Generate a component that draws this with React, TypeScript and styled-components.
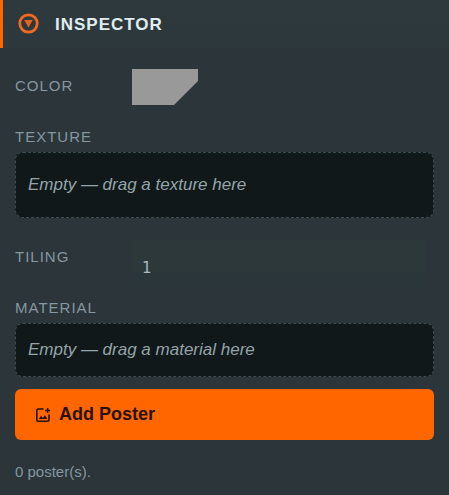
import React, { useId, useState } from "react";
import styled, { createGlobalStyle } from "styled-components";

const GlobalStyle = createGlobalStyle`
  * { box-sizing: border-box; }
  body {
    margin: 0;
    min-height: 100vh;
    background: #2b353a;
    font-family: "Liberation Sans", Arial, sans-serif;
  }
`;

const Panel = styled.section`
  color: #8597a0;
`;

const Header = styled.header`
  display: flex;
  align-items: center;
  gap: 16px;
  height: 48px;
  padding: 0 16px 2px 15px;
  border-left: 3px solid #ff6600;
  background: linear-gradient(#2e393d, #2d383c);
`;

const Title = styled.h2`
  margin: 0;
  padding-top: 4px;
  font-size: 17px;
  line-height: 20px;
  font-weight: 700;
  letter-spacing: 1px;
  color: #e0edf0;
  text-transform: uppercase;
`;

const Body = styled.div`
  display: flex;
  flex-direction: column;
  gap: 22px;
  padding: 21px 15px 12px;
`;

const Field = styled.div`
  display: grid;
  grid-template-columns: 101px minmax(0, 1fr);
  column-gap: 16px;
`;

const Group = styled.div`
  display: flex;
  flex-direction: column;
  gap: 10px;
`;

const Stack = styled.div`
  display: flex;
  flex-direction: column;
  gap: 5px;
`;

const Label = styled.label<{ $inline?: boolean }>`
  padding-top: ${(p) => (p.$inline ? 7 : 0)}px;
  font-size: 15px;
  line-height: 20px;
  letter-spacing: 1px;
  text-transform: uppercase;
`;

const Swatch = styled.input`
  width: 66px;
  height: 36px;
  padding: 0;
  border: 0;
  background: none;
  clip-path: polygon(0 0, 100% 0, 100% 12px, 42px 100%, 0 100%);
  cursor: pointer;

  &::-webkit-color-swatch-wrapper { padding: 0; }
  &::-webkit-color-swatch { border: 0; border-radius: 0; }
`;

const NumberInput = styled.input`
  width: 100%;
  height: 48px;
  margin: 0;
  padding: 8px 10px 0;
  border: 0;
  border-right: 9px solid #2b353a;
  background: linear-gradient(#2d383b 32px, #2b363b 32px);
  color: #a9b9be;
  font: 15px "DejaVu Sans", Verdana, sans-serif;
  outline: 0;
`;

const DropZone = styled.div<{ $tall?: boolean }>`
  display: flex;
  align-items: center;
  height: ${(p) => (p.$tall ? 66 : 54)}px;
  padding: 0 12px;
  border: 1px dashed #3d4c50;
  border-radius: 8px;
  background: #10181a;
  color: #95a4a8;
  font-size: 17px;
  line-height: 20px;
  font-style: italic;
`;

const Actions = styled.div`
  display: flex;
  flex-direction: column;
  gap: 12px;
`;

const AddButton = styled.button`
  display: flex;
  align-items: center;
  gap: 8px;
  height: 51px;
  padding: 0 20px;
  border: 0;
  border-radius: 6px;
  background: #ff6600;
  color: #28120b;
  font: 700 18px "Liberation Sans", Arial, sans-serif;
  cursor: pointer;
`;

const Count = styled.p`
  margin: 0;
  font-size: 15px;
  line-height: 20px;
`;

const InspectorIcon = () => (
  <svg width="21" height="21" viewBox="0 0 21 21" aria-hidden="true">
    <circle cx="10.5" cy="10.5" r="8.7" fill="none" stroke="#f06a22" strokeWidth="2.8" />
    <path d="M6.2 7h8.6l-4.3 7.4z" fill="#e8611f" />
  </svg>
);

const PosterIcon = () => (
  <svg width="16" height="16" viewBox="0 0 16 16" fill="none" stroke="currentColor" aria-hidden="true">
    <path d="M8.5 2H3.2Q1.8 2 1.8 3.4v9.4q0 1.4 1.4 1.4h9.4q1.4 0 1.4-1.4V7.5" strokeWidth="1.6" />
    <path d="M12.6 1v5M10.1 3.5h5" strokeWidth="1.5" />
    <path d="M3.8 12l2.3-3.2 1.7 2.1 2.1-2.7 2.6 3.8z" fill="currentColor" stroke="none" />
  </svg>
);

export default function App() {
  const id = useId();
  const [color, setColor] = useState("#999999");
  const [tiling, setTiling] = useState("1");
  const [posters, setPosters] = useState(0);

  return (
    <>
      <GlobalStyle />
      <Panel>
        <Header>
          <InspectorIcon />
          <Title>Inspector</Title>
        </Header>
        <Body>
          <Field>
            <Label $inline htmlFor={`${id}-color`}>Color</Label>
            <Swatch id={`${id}-color`} type="color" value={color} onChange={(e) => setColor(e.target.value)} />
          </Field>
          <Stack>
            <Label as="span" id={`${id}-texture`}>Texture</Label>
            <DropZone $tall role="group" aria-labelledby={`${id}-texture`}>Empty — drag a texture here</DropZone>
          </Stack>
          <Group>
            <Field>
              <Label $inline htmlFor={`${id}-tiling`}>Tiling</Label>
              <NumberInput
                id={`${id}-tiling`}
                inputMode="decimal"
                value={tiling}
                onChange={(e) => setTiling(e.target.value)}
              />
            </Field>
            <Actions>
              <Stack>
                <Label as="span" id={`${id}-material`}>Material</Label>
                <DropZone role="group" aria-labelledby={`${id}-material`}>Empty — drag a material here</DropZone>
              </Stack>
              <AddButton type="button" onClick={() => setPosters(posters + 1)}>
                <PosterIcon />
                Add Poster
              </AddButton>
            </Actions>
          </Group>
          <Count>{posters} poster(s).</Count>
        </Body>
      </Panel>
    </>
  );
}
